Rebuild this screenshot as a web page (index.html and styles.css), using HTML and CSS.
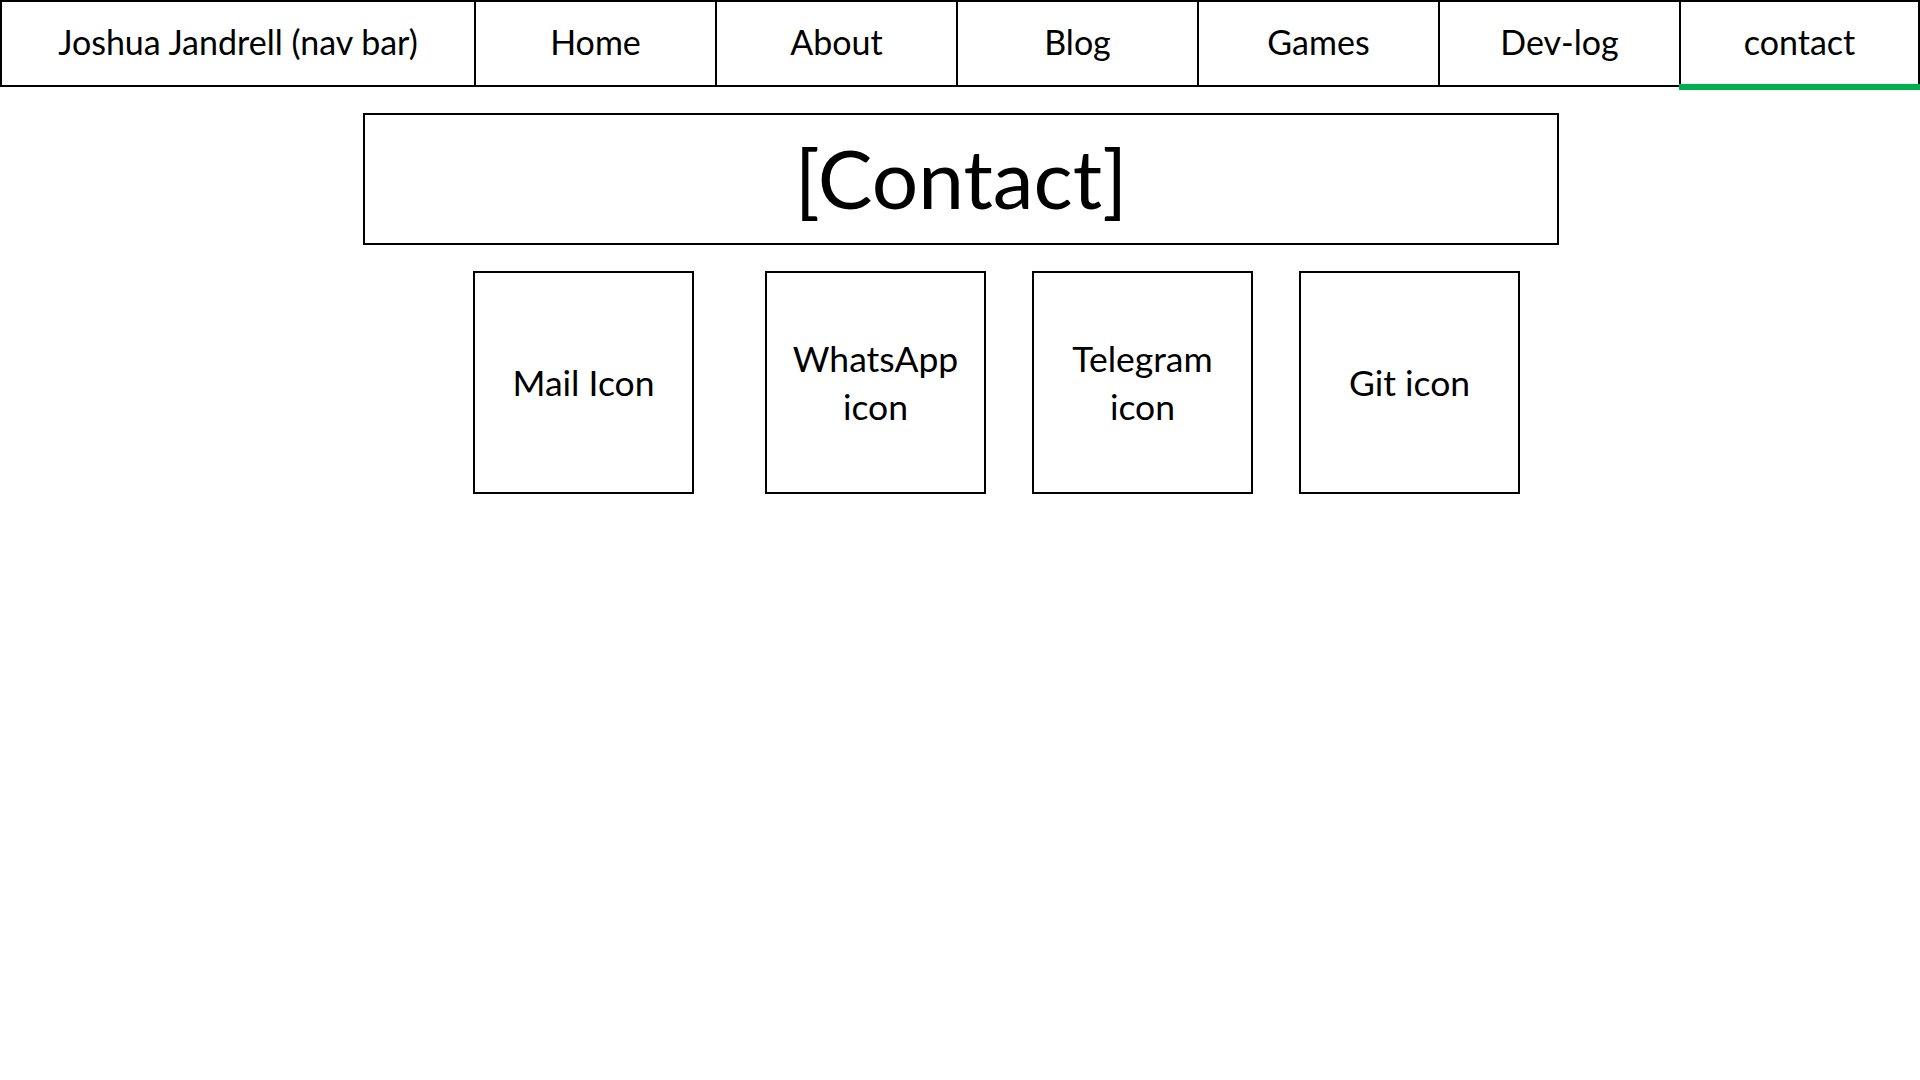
FILE: index.html
```html
<!DOCTYPE html>
<html lang="en">
<head>
<meta charset="utf-8">
<title>Contact</title>
<link rel="stylesheet" href="styles.css">
</head>
<body>
<nav class="nav">
  <div class="nav-item nav-brand">Joshua Jandrell (nav bar)</div>
  <div class="nav-item">Home</div>
  <div class="nav-item">About</div>
  <div class="nav-item">Blog</div>
  <div class="nav-item">Games</div>
  <div class="nav-item">Dev-log</div>
  <div class="nav-item nav-active">contact</div>
</nav>
<main class="main">
  <h1 class="title">[Contact]</h1>
  <div class="cards">
    <div class="card card-first">Mail Icon</div>
    <div class="card">WhatsApp icon</div>
    <div class="card">Telegram icon</div>
    <div class="card">Git icon</div>
  </div>
</main>
</body>
</html>
```

FILE: styles.css
```css
html, body {
  margin: 0;
  padding: 0;
  background: #ffffff;
}

body {
  width: 1920px;
  height: 1080px;
  font-family: "Lato", "Open Sans", sans-serif;
  color: #000000;
}

.nav {
  display: flex;
  height: 87px;
  box-sizing: border-box;
  border-top: 2px solid #000;
  border-bottom: 2px solid #000;
  border-right: 2px solid #000;
}

.nav-item {
  position: relative;
  flex: 0 0 241px;
  box-sizing: border-box;
  border-left: 2px solid #000;
  display: flex;
  align-items: center;
  justify-content: center;
  font-size: 34px;
  line-height: 1;
  padding-bottom: 3px;
}

.nav-brand {
  flex-basis: 474px;
}

.nav-item:last-child {
  flex: 1 1 auto;
}

.nav-active::after {
  content: "";
  position: absolute;
  left: -2px;
  right: -2px;
  bottom: -5px;
  height: 6px;
  background: #00b050;
}

.main {
  display: flex;
  flex-direction: column;
  padding-top: 26px;
}

.title {
  margin: 0 0 0 363px;
  width: 1196px;
  height: 132px;
  box-sizing: border-box;
  border: 2px solid #000;
  display: flex;
  align-items: center;
  justify-content: center;
  font-size: 82px;
  font-weight: 400;
  line-height: 1;
  padding-bottom: 4px;
}

.cards {
  display: flex;
  gap: 46px;
  margin-top: 26px;
  margin-left: 473px;
}

.card {
  width: 221px;
  height: 223px;
  box-sizing: border-box;
  border: 2px solid #000;
  padding: 0 12px;
  display: flex;
  align-items: center;
  justify-content: center;
  text-align: center;
  font-size: 35.5px;
  line-height: 48px;
}

.card-first {
  margin-right: 25px;
}
```
